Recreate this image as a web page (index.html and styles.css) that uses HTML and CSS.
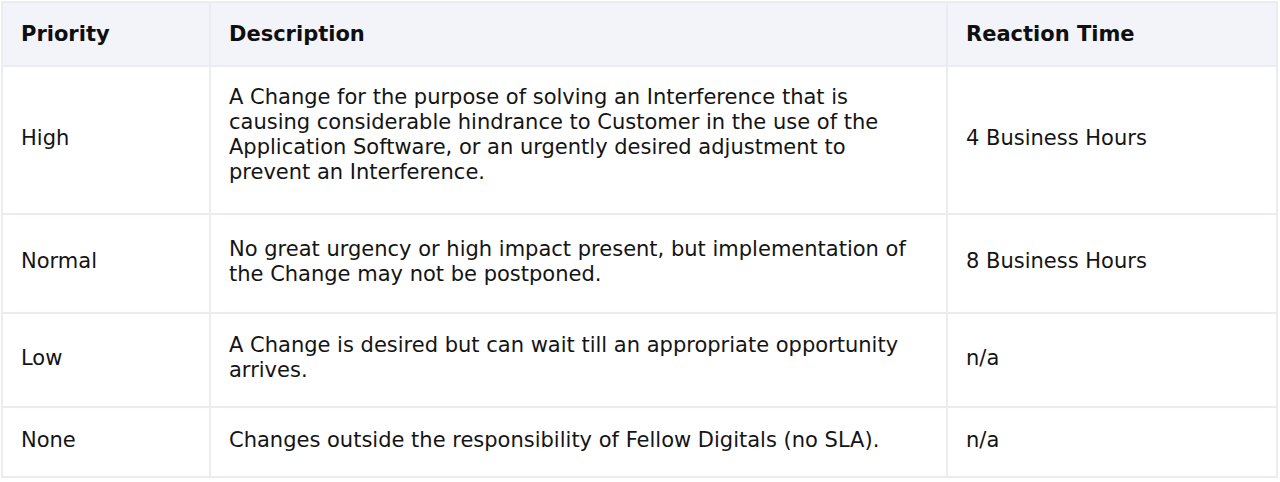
FILE: index.html
```html
<!DOCTYPE html>
<html lang="en">
<head>
<meta charset="utf-8">
<link rel="stylesheet" href="styles.css">
</head>
<body>
<table class="sla">
  <colgroup>
    <col class="c-priority">
    <col class="c-desc">
    <col class="c-time">
  </colgroup>
  <thead>
    <tr class="r-head">
      <th>Priority</th>
      <th>Description</th>
      <th>Reaction Time</th>
    </tr>
  </thead>
  <tbody>
    <tr class="r-high">
      <td>High</td>
      <td class="desc-long">A Change for the purpose of solving an Interference that is causing considerable hindrance to Customer in the use of the Application Software, or an urgently desired adjustment to prevent an Interference.</td>
      <td>4 Business Hours</td>
    </tr>
    <tr class="r-normal">
      <td>Normal</td>
      <td>No great urgency or high impact present, but implementation of the Change may not be postponed.</td>
      <td>8 Business Hours</td>
    </tr>
    <tr class="r-low">
      <td>Low</td>
      <td>A Change is desired but can wait till an appropriate opportunity arrives.</td>
      <td>n/a</td>
    </tr>
    <tr class="r-none">
      <td>None</td>
      <td>Changes outside the responsibility of Fellow Digitals (no SLA).</td>
      <td>n/a</td>
    </tr>
  </tbody>
</table>
</body>
</html>
```
FILE: styles.css
```css
html, body {
  margin: 0;
  padding: 0;
  background: #ffffff;
}
body {
  padding: 1px 4px 0 1px;
  font-family: "DejaVu Sans", "Open Sans", sans-serif;
  color: #141414;
}
.sla {
  width: 1275px;
  border-collapse: collapse;
  table-layout: fixed;
}
.c-priority { width: 208px; }
.c-desc { width: 737px; }
.c-time { width: 330px; }
.sla th,
.sla td {
  border: 2px solid #ebebf2;
  padding: 0 18px;
  text-align: left;
  vertical-align: middle;
}
.sla th {
  background: #f2f4fa;
  font-size: 21px;
  font-weight: 700;
  line-height: 25px;
  color: #0f0f0f;
}
.sla td {
  font-size: 21px;
  font-weight: 400;
  line-height: 25px;
  padding-bottom: 4px;
}
.sla td.desc-long {
  padding-bottom: 10px;
}
.r-head { height: 64px; }
.r-high { height: 148px; }
.r-normal { height: 99px; }
.r-low { height: 94px; }
.r-none { height: 70px; }
```
